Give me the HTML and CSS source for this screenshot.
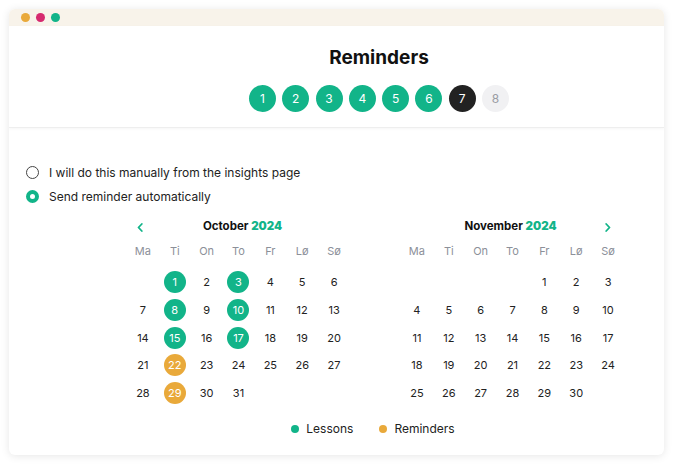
FILE: index.html
```html
<!DOCTYPE html>
<html lang="en">
<head>
    <meta charset="UTF-8">
    <title>Reminders</title>
    <link rel="stylesheet" href="styles.css">
</head>
<body>
    <div class="window">
        <!-- Title bar -->
        <div class="titlebar">
            <span class="dot orange"></span>
            <span class="dot pink"></span>
            <span class="dot green"></span>
        </div>

        <!-- Header with steps -->
        <div class="header">
            <h1>Reminders</h1>
            <div class="steps">
                <span class="step done">1</span>
                <span class="step done">2</span>
                <span class="step done">3</span>
                <span class="step done">4</span>
                <span class="step done">5</span>
                <span class="step done">6</span>
                <span class="step current">7</span>
                <span class="step todo">8</span>
            </div>
        </div>

        <div class="content">
            <div class="options">
                <label class="option"><span class="radio"></span>I will do this manually from the insights page</label>
                <label class="option"><span class="radio checked"></span>Send reminder automatically</label>
            </div>

            <div class="calendars">
                <!-- October -->
                <div class="calendar first">
                    <div class="cal-head">
                        <span class="nav">
                            <svg width="6" height="9" viewBox="0 0 6 9"><polyline points="4.8,1 1.5,4.5 4.8,8" fill="none" stroke="#12b489" stroke-width="1.8" stroke-linecap="round" stroke-linejoin="round"/></svg>
                        </span>
                        <span class="month">October <b>2024</b></span>
                        <span></span>
                    </div>
                    <div class="days">
                        <span class="wd">Ma</span><span class="wd">Ti</span><span class="wd">On</span><span class="wd">To</span><span class="wd">Fr</span><span class="wd">Lø</span><span class="wd">Sø</span>
                        <span></span><span class="lesson">1</span><span>2</span><span class="lesson">3</span><span>4</span><span>5</span><span>6</span>
                        <span>7</span><span class="lesson">8</span><span>9</span><span class="lesson">10</span><span>11</span><span>12</span><span>13</span>
                        <span>14</span><span class="lesson">15</span><span>16</span><span class="lesson">17</span><span>18</span><span>19</span><span>20</span>
                        <span>21</span><span class="reminder">22</span><span>23</span><span>24</span><span>25</span><span>26</span><span>27</span>
                        <span>28</span><span class="reminder">29</span><span>30</span><span>31</span>
                    </div>
                </div>

                <!-- November -->
                <div class="calendar second">
                    <div class="cal-head">
                        <span></span>
                        <span class="month">November <b>2024</b></span>
                        <span class="nav">
                            <svg width="6" height="9" viewBox="0 0 6 9"><polyline points="1.2,1 4.5,4.5 1.2,8" fill="none" stroke="#12b489" stroke-width="1.8" stroke-linecap="round" stroke-linejoin="round"/></svg>
                        </span>
                    </div>
                    <div class="days">
                        <span class="wd">Ma</span><span class="wd">Ti</span><span class="wd">On</span><span class="wd">To</span><span class="wd">Fr</span><span class="wd">Lø</span><span class="wd">Sø</span>
                        <span></span><span></span><span></span><span></span><span>1</span><span>2</span><span>3</span>
                        <span>4</span><span>5</span><span>6</span><span>7</span><span>8</span><span>9</span><span>10</span>
                        <span>11</span><span>12</span><span>13</span><span>14</span><span>15</span><span>16</span><span>17</span>
                        <span>18</span><span>19</span><span>20</span><span>21</span><span>22</span><span>23</span><span>24</span>
                        <span>25</span><span>26</span><span>27</span><span>28</span><span>29</span><span>30</span>
                    </div>
                </div>
            </div>

            <div class="legend">
                <span class="key"><span class="bullet lesson-dot"></span>Lessons</span>
                <span class="key"><span class="bullet reminder-dot"></span>Reminders</span>
            </div>
        </div>
    </div>
</body>
</html>
```

FILE: styles.css
```css
/* General */
body {
    margin: 0;
    padding: 9px 9px 10px 9px;
    background: #fff;
    font-family: 'Inter', sans-serif;
    color: #222;
}

.window {
    width: 655px;
    height: 446px;
    background: #fff;
    border-radius: 6px;
    box-shadow: 0 1px 8px rgba(0, 0, 0, 0.10);
    overflow: hidden;
}

/* Title bar */
.titlebar {
    height: 17px;
    background: #f8f3ea;
    display: flex;
    align-items: center;
    gap: 6px;
    padding-left: 12px;
}

.dot {
    width: 9px;
    height: 9px;
    border-radius: 50%;
}

.dot.orange { background: #e9a93a; }
.dot.pink { background: #d62a6f; }
.dot.green { background: #12b489; }

/* Header */
.header {
    padding: 20px 0 15px 85px;
    text-align: center;
    border-bottom: 1px solid #eeeeee;
    box-shadow: 0 1px 3px rgba(0, 0, 0, 0.04);
}

.header h1 {
    margin: 0;
    font-size: 19px;
    font-weight: 700;
    line-height: 24px;
    color: #111;
}

.steps {
    display: flex;
    justify-content: center;
    gap: 6.3px;
    margin-top: 15px;
}

.step {
    width: 27px;
    height: 27px;
    border-radius: 50%;
    display: flex;
    align-items: center;
    justify-content: center;
    font-size: 12px;
    color: #fff;
}

.step.done { background: #12b489; }
.step.current { background: #222; }
.step.todo { background: #f1f1f3; color: #9a9ca4; }

/* Options */
.content {
    padding: 32px 0 0 17px;
}

.option {
    display: flex;
    align-items: center;
    height: 24px;
    font-size: 12px;
    color: #222;
}

.radio {
    width: 11px;
    height: 11px;
    border: 1.5px solid #444;
    border-radius: 50%;
    margin-right: 10px;
    box-sizing: content-box;
}

.radio.checked {
    width: 5px;
    height: 5px;
    border: 4.5px solid #12b489;
    background: #fff;
}

/* Calendars */
.calendars {
    display: flex;
    gap: 51px;
    margin: 8px 0 0 101px;
}

.calendar {
    width: 223px;
}

.cal-head {
    display: grid;
    align-items: center;
    height: 20px;
}

.first .cal-head { grid-template-columns: 26px 1fr 18px; }
.second .cal-head { grid-template-columns: 28px 1fr 32px; }

.nav {
    display: flex;
    justify-content: center;
    padding-top: 3px;
}

.month {
    text-align: center;
    font-size: 11.5px;
    font-weight: 700;
    color: #111;
}

.month b {
    color: #12b489;
}

.days {
    display: grid;
    grid-template-columns: repeat(7, 1fr);
    grid-auto-rows: 27.6px;
    margin-top: 5px;
    font-size: 11px;
}

.days span {
    display: flex;
    align-items: center;
    justify-content: center;
    color: #222;
}

.days .wd {
    height: 20px;
    color: #8c9099;
    margin-bottom: 3px;
}

.days .lesson,
.days .reminder {
    width: 22px;
    height: 22px;
    margin: auto;
    border-radius: 50%;
    color: #fff;
}

.days .lesson { background: #12b489; }
.days .reminder { background: #e9a93a; }

/* Legend */
.legend {
    display: flex;
    justify-content: center;
    gap: 26px;
    margin: 12px 0 0 56px;
    font-size: 12px;
}

.key {
    display: flex;
    align-items: center;
    height: 20px;
}

.bullet {
    width: 8px;
    height: 8px;
    border-radius: 50%;
    margin-right: 7px;
}

.lesson-dot { background: #12b489; }
.reminder-dot { background: #e9a93a; }
```
